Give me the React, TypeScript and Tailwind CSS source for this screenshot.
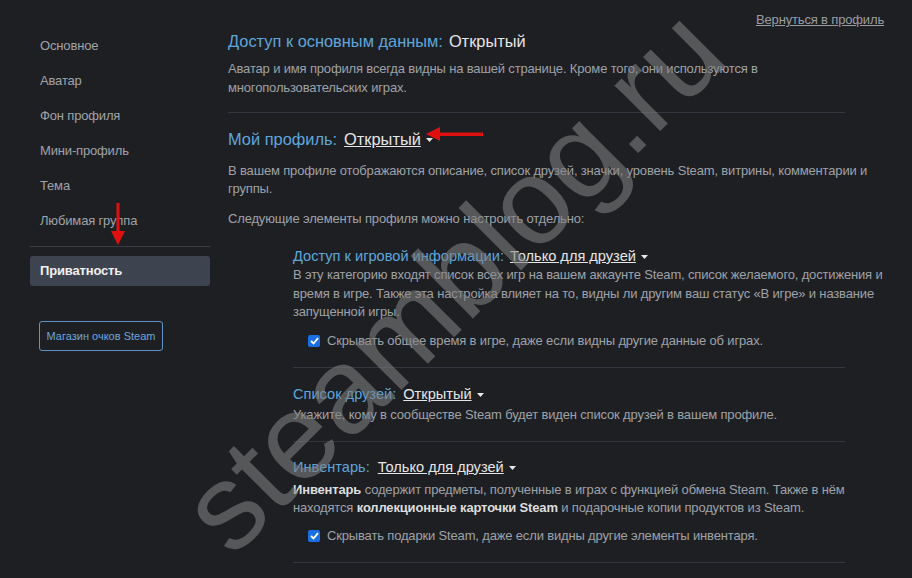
import React from "react";

const Caret = () => (
  <svg width="7" height="4" viewBox="0 0 7 4" className="ml-[5px] mt-[2px] inline-block">
    <path d="M0 0 L7 0 L3.5 4 Z" fill="#e8e8e8" />
  </svg>
);

const Check = () => (
  <span className="inline-flex h-[12px] w-[12px] items-center justify-center rounded-[2px] bg-[#1a6fe3]">
    <svg width="9" height="8" viewBox="0 0 9 8">
      <path d="M1 4 L3.5 6.5 L8 1.2" stroke="white" strokeWidth="1.8" fill="none" />
    </svg>
  </span>
);

const Divider = () => <div className="h-px w-full bg-[#33363e]" />;

export default function App() {
  const side = ["Основное", "Аватар", "Фон профиля", "Мини-профиль", "Тема", "Любимая группа"];
  return (
    <div
      className="relative flex h-[578px] w-[912px] overflow-hidden bg-[#1e1f23] text-[13px] tracking-[-0.16px]"
      style={{ fontFamily: '"Liberation Sans", Arial, sans-serif' }}
    >
      {/* Sidebar */}
      <div className="flex w-[228px] shrink-0 flex-col pl-[30px] pt-[28px]">
        <div className="w-[180px]">
          {side.map((s) => (
            <div key={s} className="flex h-[35px] items-center pl-[10px] text-[#a0a3a8]">
              {s}
            </div>
          ))}
          <div className="mt-[8px] h-px bg-[#3a3c42]" />
          <div className="mt-[9px] flex h-[30px] items-center rounded-[3px] bg-[#3e4350] pl-[10px] font-bold text-[#f0f0f0]">
            Приватность
          </div>
        </div>
        <div className="ml-[9px] mt-[35px] flex h-[30px] w-[124px] items-center justify-center rounded-[3px] border border-[#5f94c9] text-[11px] tracking-normal text-[#6da5de]">
          Магазин очков Steam
        </div>
      </div>

      {/* Main */}
      <div className="flex w-[656px] flex-col">
        <div className="flex justify-end pt-[12px]">
          <span className="text-[13px] leading-[16px] text-[#9a9da2] underline">Вернуться в профиль</span>
        </div>

        <div className="mt-[3px] text-[16.4px] leading-[20px] tracking-normal">
          <span className="text-[#5ea7dc]">Доступ к основным данным:</span>
          <span className="ml-[6px] text-[#e6e6e6]">Открытый</span>
        </div>
        <div className="mt-[8px] leading-[19px] text-[#9ea2a8]">
          <div className="whitespace-nowrap">Аватар и имя профиля всегда видны на вашей странице. Кроме того, они используются в</div>
          <div className="whitespace-nowrap">многопользовательских играх.</div>
        </div>
        <div className="mt-[15px] w-[617px]">
          <Divider />
        </div>

        <div className="mt-[16px] flex items-center text-[16.4px] leading-[20px] tracking-normal">
          <span className="text-[#5ea7dc]">Мой профиль:</span>
          <span className="ml-[7px] text-[#e6e6e6] underline">Открытый</span>
          <Caret />
        </div>
        <div className="mt-[13px] leading-[18px] text-[#9ea2a8]">
          <div className="whitespace-nowrap">В вашем профиле отображаются описание, список друзей, значки, уровень Steam, витрины, комментарии и</div>
          <div className="whitespace-nowrap">группы.</div>
        </div>
        <div className="mt-[12px] leading-[18px] text-[#9ea2a8]">Следующие элементы профиля можно настроить отдельно:</div>

        {/* Sub sections */}
        <div className="ml-[65px] flex w-[552px] flex-col">
          <div className="mt-[19px] flex items-center text-[14.6px] leading-[18px] tracking-normal">
            <span className="text-[#5ea7dc]">Доступ к игровой информации:</span>
            <span className="ml-[6px] text-[#e6e6e6] underline">Только для друзей</span>
            <Caret />
          </div>
          <div className="mt-[1px] leading-[18.5px] text-[#9ea2a8]">
            <div className="whitespace-nowrap">В эту категорию входят список всех игр на вашем аккаунте Steam, список желаемого, достижения и</div>
            <div className="whitespace-nowrap">время в игре. Также эта настройка влияет на то, видны ли другим ваш статус «В игре» и название</div>
            <div className="whitespace-nowrap">запущенной игры.</div>
          </div>
          <div className="ml-[15px] mt-[10px] flex h-[18px] items-center gap-[7px] text-[#9ea2a8]">
            <Check />
            <span className="whitespace-nowrap">Скрывать общее время в игре, даже если видны другие данные об играх.</span>
          </div>
          <div className="mt-[17px]">
            <Divider />
          </div>

          <div className="mt-[17px] flex items-center text-[14.6px] leading-[18px] tracking-normal">
            <span className="text-[#5ea7dc]">Список друзей:</span>
            <span className="ml-[7px] text-[#e6e6e6] underline">Открытый</span>
            <Caret />
          </div>
          <div className="mt-[3px] whitespace-nowrap leading-[18px] text-[#9ea2a8]">
            Укажите, кому в сообществе Steam будет виден список друзей в вашем профиле.
          </div>
          <div className="mt-[17px]">
            <Divider />
          </div>

          <div className="mt-[16px] flex items-center text-[14.6px] leading-[18px] tracking-normal">
            <span className="text-[#5ea7dc]">Инвентарь:</span>
            <span className="ml-[8px] text-[#e6e6e6] underline">Только для друзей</span>
            <Caret />
          </div>
          <div className="mt-[5px] leading-[18px] text-[#9ea2a8]">
            <div className="whitespace-nowrap">
              <b className="text-[#dcdedf]">Инвентарь</b> содержит предметы, полученные в играх с функцией обмена Steam. Также в нём
            </div>
            <div className="whitespace-nowrap">
              находятся <b className="text-[#dcdedf]">коллекционные карточки Steam</b> и подарочные копии продуктов из Steam.
            </div>
          </div>
          <div className="ml-[15px] mt-[10px] flex h-[18px] items-center gap-[7px] text-[#9ea2a8]">
            <Check />
            <span className="whitespace-nowrap">Скрывать подарки Steam, даже если видны другие элементы инвентаря.</span>
          </div>
          <div className="mt-[17px]">
            <Divider />
          </div>
        </div>
      </div>

      {/* Red arrows (annotations) */}
      <svg className="absolute left-[111px] top-[203px]" width="14" height="42" viewBox="0 0 14 42">
        <rect x="5.5" y="0" width="3" height="30" fill="#e01010" />
        <path d="M0 28 L14 28 L7 42 Z" fill="#e01010" />
      </svg>
      <svg className="absolute left-[426px] top-[127px]" width="57" height="14" viewBox="0 0 57 14">
        <rect x="12" y="5.5" width="45" height="3.5" fill="#e01010" />
        <path d="M0 7 L14 0 L14 14 Z" fill="#e01010" />
      </svg>

      {/* Watermark */}
      <div
        className="pointer-events-none absolute left-[452px] top-[280px] whitespace-nowrap text-[122px] leading-none tracking-normal text-[rgba(128,128,128,0.58)]"
        style={{ transform: "translate(-50%, -50%) rotate(-45deg)" }}
      >
        steamblog.ru
      </div>
    </div>
  );
}
